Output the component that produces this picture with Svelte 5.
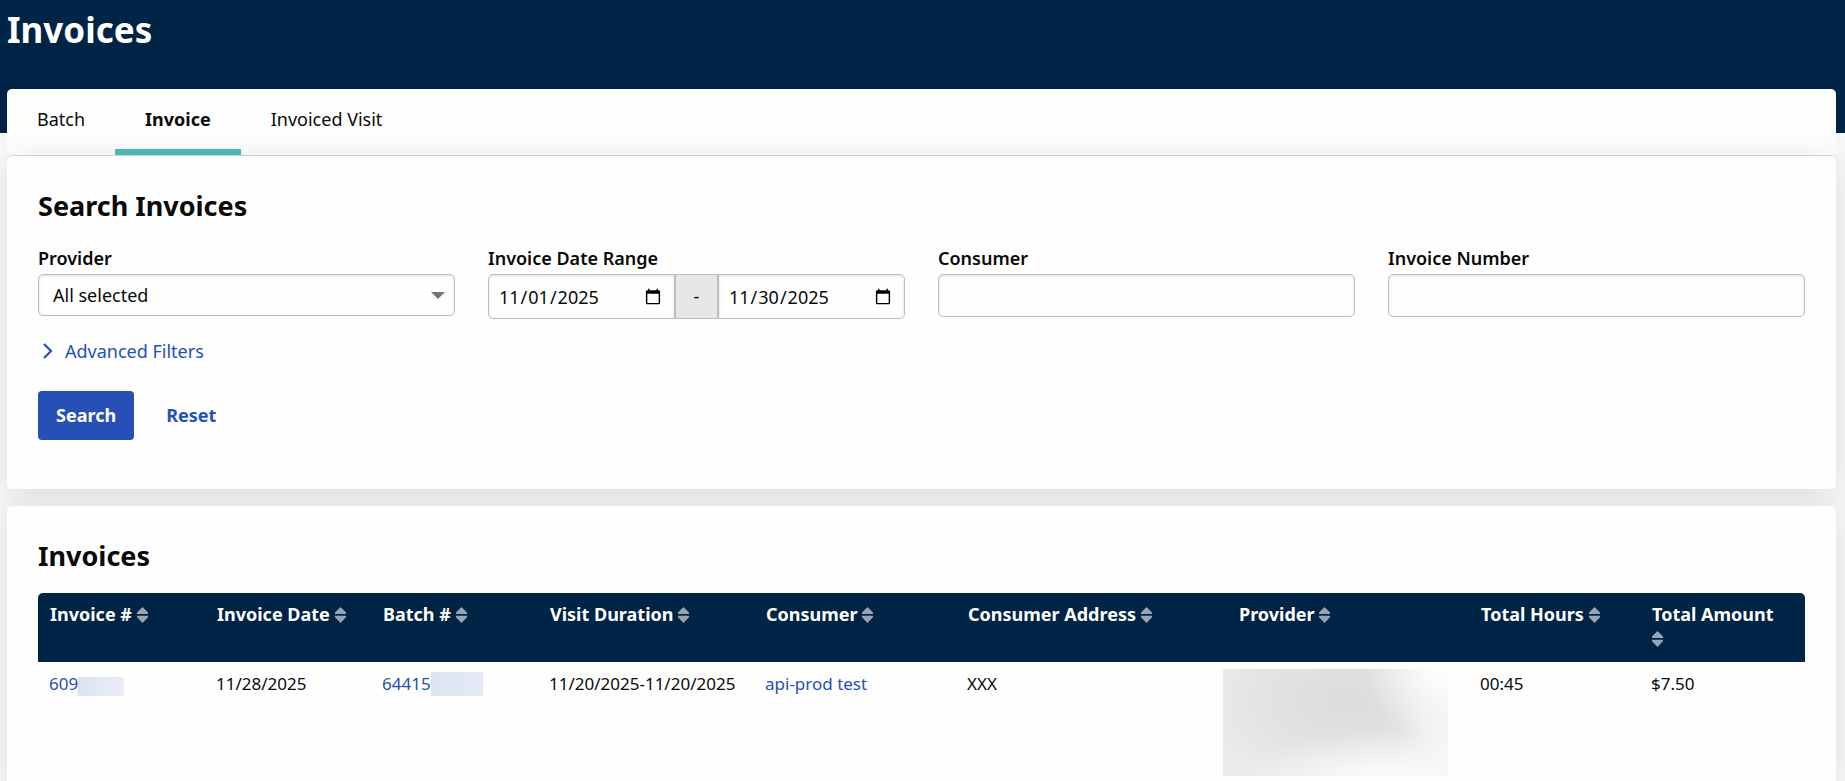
<script>
  const tabs = ['Batch', 'Invoice', 'Invoiced Visit'];
  const columns = [
    { title: 'Invoice #', share: 167 },
    { title: 'Invoice Date', share: 166 },
    { title: 'Batch #', share: 167 },
    { title: 'Visit Duration', share: 216 },
    { title: 'Consumer', share: 202 },
    { title: 'Consumer Address', share: 271 },
    { title: 'Provider', share: 242 },
    { title: 'Total Hours', share: 171 },
    { title: 'Total Amount', share: 165 }
  ];
  const total = columns.reduce((sum, c) => sum + c.share, 0);

  let active = $state('Invoice');
  let from = $state('2025-11-01');
  let to = $state('2025-11-30');
  let consumer = $state('');
  let number = $state('');

  function reset() {
    from = '2025-11-01';
    to = '2025-11-30';
    consumer = '';
    number = '';
  }
</script>

<div class="page">
  <header><h1>Invoices</h1></header>

  <main>
    <nav class="tabs">
      {#each tabs as tab}
        <button type="button" class:active={active === tab} onclick={() => (active = tab)}>{tab}</button>
      {/each}
    </nav>

    <section class="card search">
      <h2>Search Invoices</h2>
      <form onsubmit={(e) => e.preventDefault()}>
        <div class="fields">
          <div class="field">
            <label for="provider">Provider</label>
            <div class="select">
              <select id="provider"><option>All selected</option></select>
              <svg width="14" height="7" viewBox="0 0 14 7" aria-hidden="true"><path d="M0 0h14L7 7z" fill="#757575" /></svg>
            </div>
          </div>
          <div class="field">
            <label for="from">Invoice Date Range</label>
            <div class="range">
              <input id="from" type="date" bind:value={from} />
              <span>-</span>
              <input type="date" aria-label="Invoice date range end" bind:value={to} />
            </div>
          </div>
          <div class="field">
            <label for="consumer">Consumer</label>
            <input id="consumer" class="text" type="text" bind:value={consumer} />
          </div>
          <div class="field">
            <label for="number">Invoice Number</label>
            <input id="number" class="text" type="text" bind:value={number} />
          </div>
        </div>

        <button type="button" class="advanced">
          <svg width="10" height="16" viewBox="0 0 10 16" aria-hidden="true">
            <path d="M1 1 8 8l-7 7" fill="none" stroke="#2650b5" stroke-width="2.200" />
          </svg>
          Advanced Filters
        </button>

        <div class="actions">
          <button type="submit" class="primary">Search</button>
          <button type="button" class="reset" onclick={reset}>Reset</button>
        </div>
      </form>
    </section>

    <section class="card results">
      <h2>Invoices</h2>
      <table>
        <colgroup>
          {#each columns as c}<col style:width="{(c.share / total) * 100}%" />{/each}
        </colgroup>
        <thead>
          <tr>
            {#each columns as c}
              <th scope="col">
                <button type="button">
                  {c.title}
                  <svg width="11" height="16" viewBox="0 0 11 16" aria-hidden="true">
                    <path d="M5.500 0 11 5.600V7H0V5.600zM0 8.800h11v1.400L5.500 16 0 10.200z" fill="#99a4b3" />
                  </svg>
                </button>
              </th>
            {/each}
          </tr>
        </thead>
        <tbody>
          <tr>
            <td><div class="masked"><a href="#invoice">609</a><span class="mask short"></span></div></td>
            <td>11/28/2025</td>
            <td><div class="masked"><a href="#batch">64415</a><span class="mask tall"></span></div></td>
            <td>11/20/2025-11/20/2025</td>
            <td><a href="#consumer">api-prod test</a></td>
            <td>XXX</td>
            <td class="provider"><div class="smudge"></div></td>
            <td>00:45</td>
            <td>$7.50</td>
          </tr>
        </tbody>
      </table>
    </section>
  </main>
</div>

<style>
  :global(body) {
    margin: 0;
    background: #f8f8f8;
  }

  .page {
    display: flex;
    flex-direction: column;
    min-height: 100vh;
    font-family: 'Noto Sans', 'Open Sans', sans-serif;
    font-size: 18px;
    line-height: 24px;
    color: #0a0a0a;
  }

  button,
  input,
  select {
    box-sizing: border-box;
    margin: 0;
    font: inherit;
    color: inherit;
  }

  button {
    border: 0;
    background: none;
    padding: 0;
    cursor: pointer;
  }

  header {
    box-sizing: border-box;
    height: 133px;
    padding: 6px 7px;
    background: #002446;
  }

  h1 {
    margin: 0;
    font-size: 35px;
    line-height: 48px;
    font-weight: 700;
    color: #fff;
  }

  main {
    flex: 1;
    display: flex;
    flex-direction: column;
    margin: -44px 9px 0 7px;
  }

  .tabs {
    display: flex;
    margin-bottom: 1px;
    background: #fefefe;
    border-radius: 5px;
  }

  .tabs button {
    height: 66px;
    padding: 0 30px;
    border-bottom: 6px solid transparent;
  }

  .tabs .active {
    font-weight: 700;
    border-bottom-color: #4bbfb8;
  }

  .card {
    padding: 31px;
    background: #fefefe;
    border-radius: 5px;
    box-shadow: 0 4px 36px rgba(0, 0, 0, 0.11);
  }

  .search {
    padding-bottom: 49px;
    margin-bottom: 17px;
    box-shadow: 0 4px 36px rgba(0, 0, 0, 0.11), 0 -1px 0 #dcdcdc;
  }

  .results {
    flex: 1;
    padding-bottom: 0;
    border-radius: 5px 5px 0 0;
  }

  h2 {
    margin: 0 0 18px;
    font-size: 27px;
    line-height: 38px;
    font-weight: 700;
  }

  .fields {
    display: grid;
    grid-template-columns: repeat(4, minmax(0, 1fr));
    gap: 33px;
  }

  .field label {
    display: block;
    padding: 3px 0 4px;
    font-weight: 600;
  }

  .text,
  .range input,
  .select select {
    width: 100%;
    background: #fefefe;
    border: 1px solid #bdbdbd;
    border-radius: 5px;
    box-shadow: inset 0 1px 3px rgba(0, 0, 0, 0.12);
  }

  .text {
    display: block;
    height: 43px;
    padding: 0 12px;
  }

  .select {
    display: grid;
    align-items: center;
  }

  .select select,
  .select svg {
    grid-area: 1 / 1;
  }

  .select select {
    appearance: none;
    height: 42px;
    padding: 0 36px 0 14px;
  }

  .select svg {
    justify-self: end;
    margin-right: 10px;
    pointer-events: none;
  }

  .range {
    display: flex;
    height: 45px;
  }

  .range input {
    flex: 1;
    min-width: 0;
    padding: 0 10px 0 9px;
  }

  .range input:first-child {
    border-radius: 5px 0 0 5px;
  }

  .range input:last-child {
    border-radius: 0 5px 5px 0;
  }

  .range span {
    box-sizing: border-box;
    width: 43px;
    border: 1px solid #bdbdbd;
    background: #e7e7e7;
    line-height: 43px;
    text-align: center;
  }

  .advanced {
    display: flex;
    align-items: center;
    gap: 12px;
    margin: 20px 0 28px 5px;
    color: #2650b5;
  }

  .actions {
    display: flex;
    gap: 14px;
  }

  .actions button {
    height: 49px;
    padding: 0 18px 2px;
    border-radius: 4px;
    font-weight: 700;
  }

  .primary {
    background: #2650b5;
    color: #fefefe;
  }

  .reset {
    color: #2650b5;
  }

  table {
    width: 100%;
    table-layout: fixed;
    border-collapse: separate;
    border-spacing: 0;
  }

  th {
    padding: 9px 24px 12px 12px;
    background: #002446;
    color: #fefefe;
    font-weight: 700;
    text-align: left;
    vertical-align: top;
  }

  th:first-child {
    border-radius: 5px 0 0 0;
  }

  th:last-child {
    border-radius: 0 5px 0 0;
  }

  th button {
    display: block;
    text-align: left;
  }

  th svg {
    vertical-align: -2px;
  }

  td {
    padding: 10px 0 0 11px;
    font-size: 17px;
    vertical-align: top;
  }

  td a {
    color: #2650b5;
    text-decoration: none;
  }

  .masked {
    display: flex;
    align-items: flex-end;
  }

  .mask {
    background: linear-gradient(90deg, #dbe1f1, #ebeef8);
  }

  .short {
    width: 46px;
    height: 19px;
  }

  .tall {
    width: 52px;
    height: 24px;
    background: linear-gradient(90deg, #dfe4f2, #e4e9f5);
  }

  td.provider {
    padding: 7px 0 6px;
  }

  .smudge {
    height: 107px;
    margin: 0 21px 0 -4px;
    background:
      radial-gradient(ellipse 75px 75px at 97% 0, #fcfcfc 15%, rgba(252, 252, 252, 0) 100%),
      radial-gradient(ellipse 150px 52px at 75% 106%, #f9f9f9 25%, rgba(249, 249, 249, 0) 100%),
      radial-gradient(ellipse 60px 70px at 104% 70%, #f4f4f4 25%, rgba(244, 244, 244, 0) 100%),
      radial-gradient(ellipse 150px 90px at 55% 30%, #dddddd 10%, #e2e2e2 50%, #ebebeb 100%);
  }
</style>
